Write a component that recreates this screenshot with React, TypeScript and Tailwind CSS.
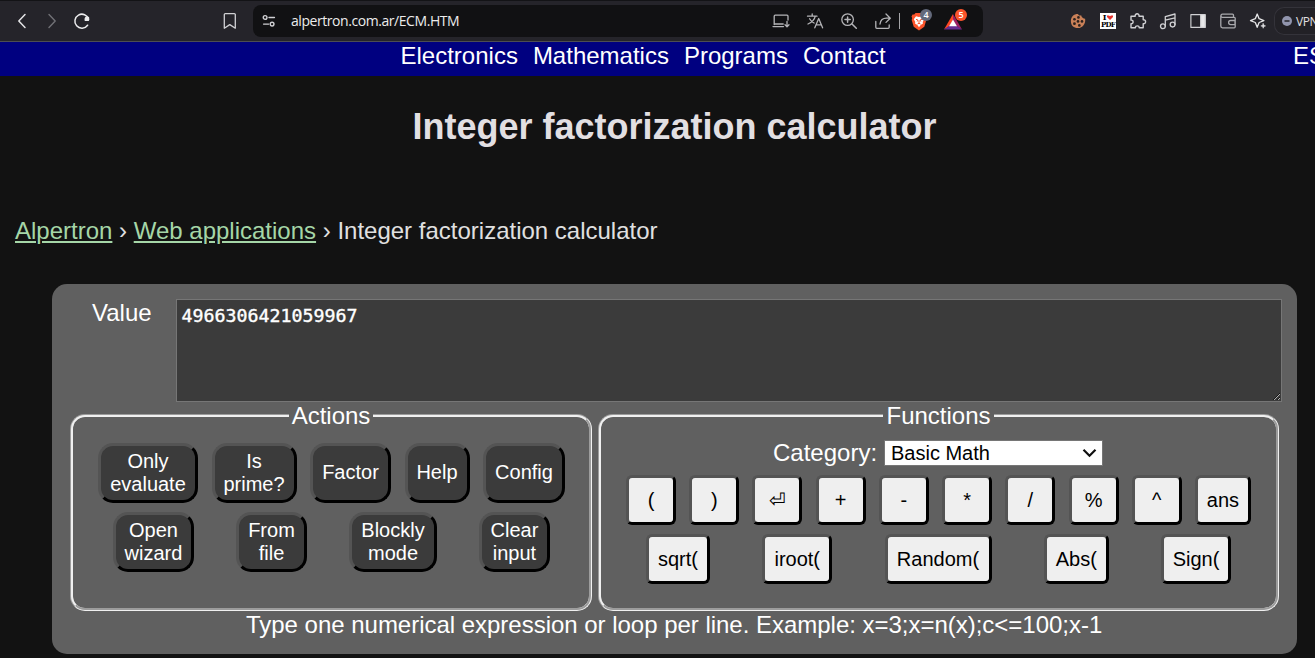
import React from "react";

type IconProps = { children: React.ReactNode; size?: number; box: string; color?: string };

function Icon({ children, size = 18, box, color = "#d0d0d3" }: IconProps) {
  return (
    <span className={`flex shrink-0 items-center justify-center ${box}`}>
      <svg width={size} height={size} viewBox="0 0 18 18" fill="none" stroke={color} strokeWidth={1.3} strokeLinecap="round" strokeLinejoin="round" overflow="visible">
        {children}
      </svg>
    </span>
  );
}

function Toolbar() {
  return (
    <header className="flex h-[42px] shrink-0 items-center border-t border-b border-t-[#131316] border-b-[#4d4d52] bg-[#25242a] font-['Open_Sans','Noto_Sans',sans-serif]">
      <div className="flex pl-[7px]">
        <Icon box="w-[30px]" color="#e4e4e6"><path d="M12 2.5L5.8 9l6.2 6.5" strokeWidth={1.5} /></Icon>
        <Icon box="w-[30px]" color="#717176"><path d="M6 2.5L12.2 9 6 15.5" strokeWidth={1.4} /></Icon>
        <Icon box="w-[30px]" color="#ececee">
          <path d="M15.6 7.2A7 7 0 1 0 14.6 13.2" strokeWidth={1.5} />
          <path d="M12.2 8.3V6.8a1.5 1.5 0 0 1 1.5-1.5h1.8v3z" fill="#ececee" />
        </Icon>
      </div>
      <Icon box="ml-[118px] w-[30px]"><path d="M4.3 1.6h9a1 1 0 0 1 1 1v13.6l-5.5-3.6-5.5 3.6V2.6a1 1 0 0 1 1-1z" /></Icon>
      <div className="ml-2 flex h-8 w-[730px] items-center rounded-lg bg-[#111113] pr-[13px] pl-[6px]">
        <Icon box="w-5" size={14}>
          <circle cx="4" cy="4.5" r="2.4" strokeWidth={1.8} />
          <path d="M9 4.5h7M2 13h6.5" strokeWidth={1.8} />
          <circle cx="13" cy="13" r="2.4" strokeWidth={1.8} />
        </Icon>
        <span className="ml-3 text-[14px] leading-5 tracking-[-0.44px] text-[#ececec]">
          <span className="inline-block w-[168px] whitespace-nowrap">alpertron.com.ar/ECM.HTM</span>
        </span>
        <div className="ml-auto flex items-center">
          <Icon box="w-[34px]" color="#b4b4b7">
            <path d="M16 8V4.2a1 1 0 0 0-1-1H3.2a1 1 0 0 0-1 1v8.3M1 14.6h10.5M2.2 12h9M15 9.5v5M13 12.8l2 2 2-2" />
          </Icon>
          <Icon box="w-[34px]" color="#b4b4b7">
            <path d="M1.5 4.2h9.5M6.2 2v2.2M9.3 4.2C8.5 7.8 5.5 10.5 2 12M3.6 6.8c1 2 2.5 3.3 4.5 4.200M8.800 15.800l3.900-9.300 3.900 9.300M10.100 12.800h5.200" />
          </Icon>
          <Icon box="w-[34px]" color="#b4b4b7">
            <circle cx="7.600" cy="7.600" r="5.800" />
            <path d="M12 12l4.300 4.300M7.600 5v5.200M5 7.600h5.200" strokeWidth={1.500} />
          </Icon>
          <Icon box="w-[34px]" color="#b4b4b7">
            <path d="M1.800 9.500v5.800a1 1 0 0 0 1 1h11.400a1 1 0 0 0 1-1v-2.300M12 2l4.300 4.200L12 10.400M16 6.200h-3.500C8.500 6.200 6.500 8.500 6 12" />
          </Icon>
          <span className="-ml-px mr-[2px] h-4 w-px bg-[#a5a5a8]" />
          <span className="relative flex w-[34px] justify-center">
            <svg width="16" height="19" viewBox="0 0 16 19">
              <path d="M4.500 1h7l1.300 1.500 1.700-.1 1 2.200-.7 1.500.5 2-2 6.700L8 18.500l-5.300-3.700-2-6.700.5-2L.5 4.600l1-2.200 1.700.1z" fill="#fb542b" />
              <path d="M5 4.300l3 .6 3-.6 2.200 3-1.500 2.700.3 1.500-2.300 1.500L8 15.200 6.300 13 4 11.500l.3-1.500L2.800 7.300z" fill="#fff" />
              <path d="M5 7.300l2 .8-.8 1.400M11 7.300l-2 .8.8 1.400M8 8.500v2.800M6.500 12L8 11.300l1.500.7" fill="none" stroke="#fb542b" />
            </svg>
            <span className="absolute -top-[3px] left-[18px] flex h-3 w-3 items-center justify-center rounded-full bg-[#63697b] text-[9px] leading-3 font-semibold text-white">4</span>
          </span>
          <span className="relative flex w-[34px] justify-center">
            <svg width="18" height="17" viewBox="0 0 18 17">
              <path d="M9 1L9 7 5 13.500 0 16.500z" fill="#ff4724" />
              <path d="M9 1L18 16.500 13 13.500 9 7z" fill="#9e1f63" />
              <path d="M0 16.500L5 13h8l5 3.500z" fill="#662d91" />
              <path d="M9 6.500L13 13.200H5z" fill="#fff" />
            </svg>
            <span className="absolute -top-[4px] left-[19px] flex h-3 w-3 items-center justify-center rounded-full bg-[#fb542b] text-[9px] leading-3 font-semibold text-white">5</span>
          </span>
        </div>
      </div>
      <div className="ml-20 flex">
        <Icon box="w-[30px]" size={16}>
          <path d="M9 1c1 2 2 2 3.500 1.500C13 5 15 6 17 6.500 18 12 14 17 9 17S1 14 1 9s3-8 8-8z" fill="#c98058" stroke="none" />
          <g fill="#2b211e" stroke="none">
            <circle cx="9.500" cy="5" r="1.500" /><circle cx="5" cy="7" r="1.500" /><circle cx="9" cy="9.500" r="1.500" />
            <circle cx="13.500" cy="9.500" r="1.500" /><circle cx="5" cy="12" r="1.600" /><circle cx="10.500" cy="14" r="1.500" />
          </g>
        </Icon>
        <span className="flex w-[30px] items-center justify-center">
          <span className="flex h-4 w-4 flex-col items-center justify-center overflow-hidden bg-white font-['DejaVu_Serif',serif] text-[8px] leading-[7px] font-bold text-black">
            <span className="flex items-center">I<svg className="ml-px" width="6" height="5" viewBox="0 0 6 5"><path d="M3 5L0 2V.5h2l1 .8L4 .5h2V2z" fill="#e5322d" /></svg></span>
            <span className="text-[7px] leading-[7px] tracking-[-0.8px]">PDF</span>
          </span>
        </span>
        <Icon box="w-[30px]">
          <path d="M2 4.200h4.200c-.7-3.200 4.500-3.200 3.800 0h4.200v3.600c3.200-.5 3.200 4.300 0 3.800v4.200h-4c.2-2.600-4-2.600-3.800 0H2v-4c2.800.3 2.800-4 0-3.700z" strokeWidth={1.400} />
        </Icon>
        <Icon box="w-[30px]">
          <circle cx="3.900" cy="14.300" r="2.400" /><circle cx="13.600" cy="12.600" r="2.400" />
          <path d="M6.300 14.300V4.600L16 2v10.600M6.300 8.200L16 5.800" />
        </Icon>
        <Icon box="w-[30px]" size={16}>
          <rect x="1" y="1.800" width="16" height="14.400" /><path d="M12 2h5v14h-5z" fill="#e8e8ea" />
        </Icon>
        <Icon box="w-[30px]" color="#a9a9ad">
          <path d="M14.500 5.300V3.200a1 1 0 0 0-1-1H3.500a1.500 1.500 0 0 0 0 3.100h11.700a1 1 0 0 1 1 1v8.500a1 1 0 0 1-1 1H3.500a1.800 1.800 0 0 1-1.700-1.800V3.700M16 8.500h-4.300a2.100 2.100 0 0 0 0 4.200H16z" />
        </Icon>
        <Icon box="w-[30px]" color="#e6e6e8">
          <path d="M8.200 2l1.900 4.700 4.800 1.900-4.800 1.900-1.900 4.800-1.900-4.800L1.500 8.600l4.800-1.900z" />
          <path d="M14.200 11.500l.7 1.700 1.700.7-1.700.7-.7 1.700-.7-1.700-1.700-.7 1.700-.7z" fill="#e6e6e8" strokeWidth={0.500} />
        </Icon>
      </div>
      <div className="ml-px flex h-7 flex-1 items-center overflow-hidden rounded-l-[10px] border border-r-0 border-[#34333a] bg-[#222126] pl-[7px] text-[12px] text-[#e0e0e2]">
        <svg width="10" height="10" viewBox="0 0 10 10" className="shrink-0"><circle cx="5" cy="5" r="5" fill="#9195ad" /><path d="M2.500 5h5" stroke="#25242a" strokeWidth="1.500" /></svg>
        <span className="ml-1 tracking-[-0.4px]">VPN</span>
      </div>
    </header>
  );
}

function ActionButton({ label, width }: { label: string; width: string }) {
  return (
    <button className={`flex h-[60px] shrink-0 items-center justify-center rounded-[15px] border-[3px] border-black bg-[#3b3b3b] pb-px text-center text-[20px] leading-[23px] whitespace-pre text-white [border-style:outset] ${width}`}>
      {label}
    </button>
  );
}

function FunctionButton({ label, width = "w-[50px]" }: { label: string; width?: string }) {
  return (
    <button className={`flex h-[50px] shrink-0 items-center justify-center rounded-[6px] border-[3px] border-black bg-[#efefef] text-[20px] leading-[23px] text-black [border-style:outset] ${width}`}>
      {label}
    </button>
  );
}

const operators = ["(", ")", "⏎", "+", "-", "*", "/", "%", "^"];

export default function App() {
  return (
    <div className="flex h-[658px] w-full flex-col overflow-hidden bg-[#121212] font-['Liberation_Sans',Arial,sans-serif] text-[24px] leading-[27px]">
      <Toolbar />
      <nav className="flex h-[34px] shrink-0 gap-[15px] overflow-hidden bg-[#000080] pl-[400.5px] text-white">
        <a>Electronics</a>
        <a>Mathematics</a>
        <a>Programs</a>
        <a>Contact</a>
        <a className="ml-auto w-[22px] shrink-0">ES</a>
      </nav>
      <h1 className="mt-[30px] pl-[34px] text-center text-[36px] leading-[41px] font-bold text-[#e2dfe2]">Integer factorization calculator</h1>
      <div className="mt-[70px] pl-[15px] text-[#e0e0e0]">
        <a className="text-[#a5d6a7] underline">Alpertron</a> › <a className="text-[#a5d6a7] underline">Web applications</a> › Integer factorization calculator
      </div>
      <main className="mt-[40px] ml-[52px] h-[370px] w-[1245px] shrink-0 rounded-[15px] bg-[#606060] pt-[15px] text-white">
        <div className="flex">
          <label className="ml-[40px] w-[84px]">Value</label>
          <textarea
            className="block h-[103px] w-[1106px] resize border border-[#767676] bg-[#3b3b3b] px-[4.5px] py-[4px] font-['DejaVu_Sans_Mono',monospace] text-[18.27px] leading-[23px] text-white [-webkit-text-stroke:0.4px_white]"
            defaultValue="4966306421059967"
            spellCheck={false}
          />
        </div>
        <div className="ml-[18px] flex gap-[6px]">
          <fieldset className="h-[209px] w-[522px] rounded-[15px] border-[3px] border-[#f0f0f0] [border-style:groove]">
            <legend className="mx-auto px-[3px]">Actions</legend>
            <div className="mt-[14px] ml-[25px] flex w-[467px] justify-between">
              <ActionButton label={"Only\nevaluate"} width="w-[100px]" />
              <ActionButton label={"Is\nprime?"} width="w-[85px]" />
              <ActionButton label="Factor" width="w-[81px]" />
              <ActionButton label="Help" width="w-[65px]" />
              <ActionButton label="Config" width="w-[82px]" />
            </div>
            <div className="mt-[9px] ml-[40px] flex w-[437px] justify-between">
              <ActionButton label={"Open\nwizard"} width="w-[81px]" />
              <ActionButton label={"From\nfile"} width="w-[71px]" />
              <ActionButton label={"Blockly\nmode"} width="w-[88px]" />
              <ActionButton label={"Clear\ninput"} width="w-[71px]" />
            </div>
          </fieldset>
          <fieldset className="h-[209px] w-[681px] rounded-[15px] border-[3px] border-[#f0f0f0] [border-style:groove]">
            <legend className="mx-auto px-[3px]">Functions</legend>
            <div className="mt-[10px] flex h-[27px] items-center pl-[172px]">
              <label className="w-[111px] pb-px whitespace-nowrap">Category:</label>
              <div className="flex h-[26px] w-[219px] items-center justify-between border border-[#767676] bg-white pt-px pr-[5px] pl-[6px] text-[20px] text-black">
                Basic Math
                <svg width="15" height="10" viewBox="0 0 15 10" fill="none" stroke="#101010" strokeWidth="2.200"><path d="M1.500 1.800l6 6 6-6" /></svg>
              </div>
            </div>
            <div className="mt-[9px] ml-[25px] flex w-[625px] justify-between">
              {operators.map((op) => <FunctionButton key={op} label={op} />)}
              <FunctionButton label="ans" width="w-[56px]" />
            </div>
            <div className="mt-[9px] ml-[45px] flex w-[585px] justify-between">
              <FunctionButton label="sqrt(" width="w-[64px]" />
              <FunctionButton label="iroot(" width="w-[70px]" />
              <FunctionButton label="Random(" width="w-[107px]" />
              <FunctionButton label="Abs(" width="w-[65px]" />
              <FunctionButton label="Sign(" width="w-[70px]" />
            </div>
          </fieldset>
        </div>
        <p className="pl-[194px] tracking-[-0.02px]">Type one numerical expression or loop per line. Example: x=3;x=n(x);c&lt;=100;x-1</p>
      </main>
    </div>
  );
}
